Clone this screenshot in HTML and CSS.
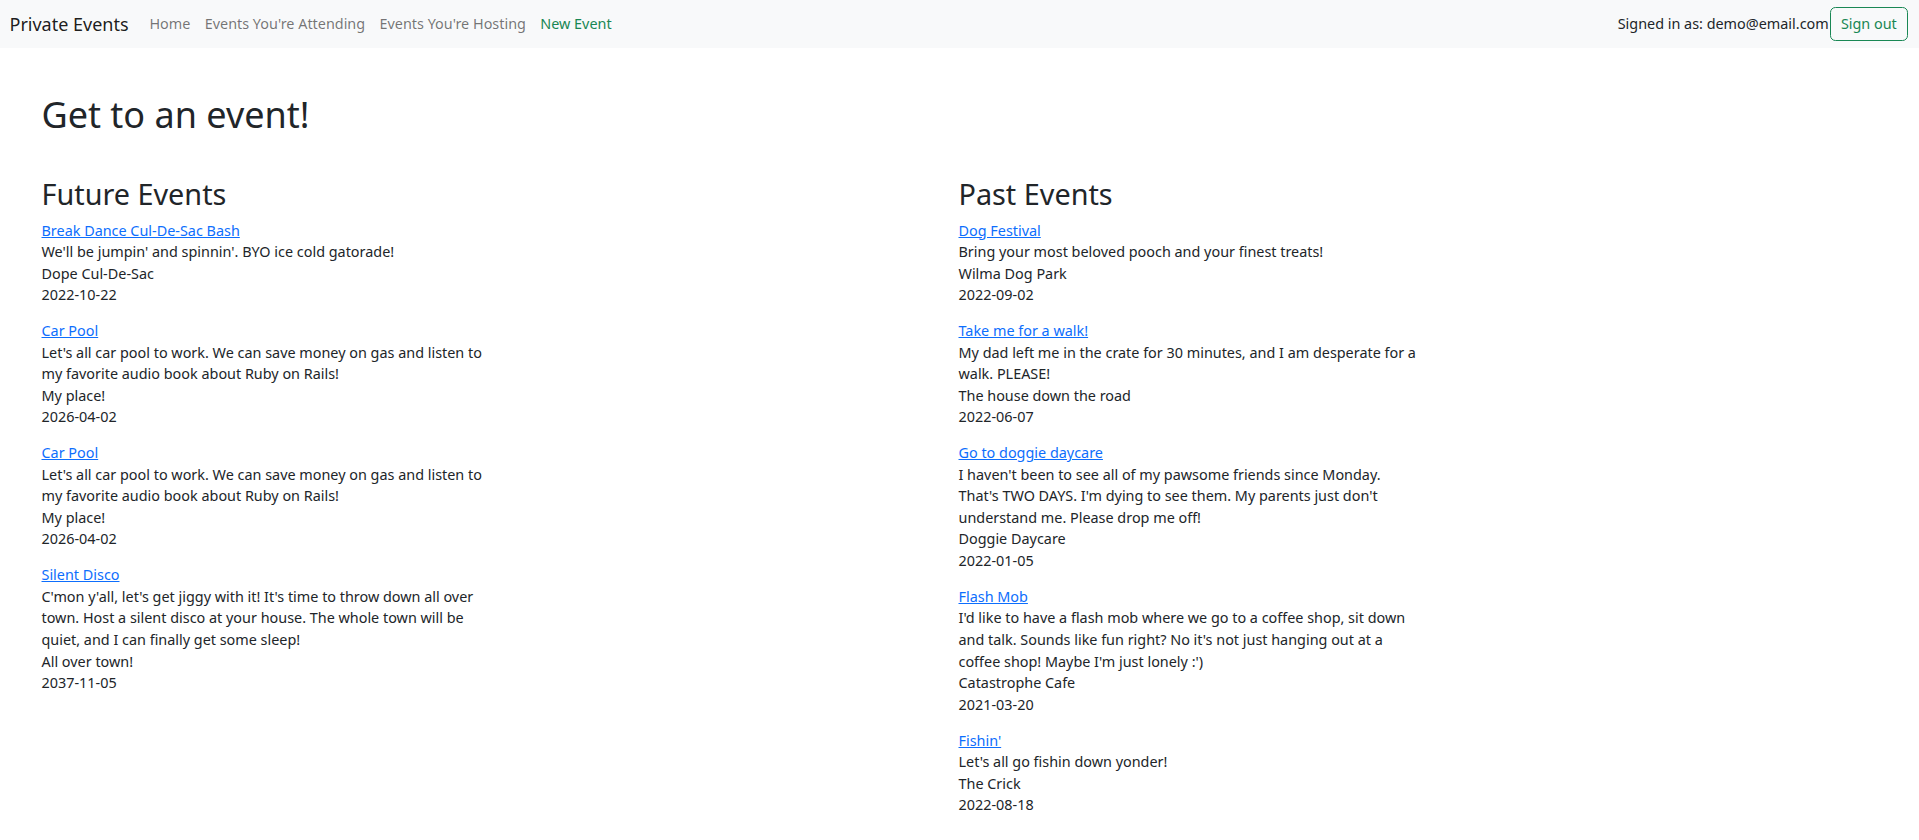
FILE: index.html
```html
<!DOCTYPE html>
<html lang="en">
<head>
<meta charset="utf-8">
<title>Private Events</title>
<link rel="stylesheet" href="styles.css">
</head>
<body>
<nav class="navbar">
  <a class="brand" href="#">Private Events</a>
  <ul class="nav">
    <li><a class="nav-link" href="#">Home</a></li>
    <li><a class="nav-link" href="#">Events You're Attending</a></li>
    <li><a class="nav-link" href="#">Events You're Hosting</a></li>
    <li><a class="nav-link nav-success" href="#">New Event</a></li>
  </ul>
  <div class="user">
    <span class="user-text">Signed in as: demo@email.com</span>
    <button class="btn-outline" type="button">Sign out</button>
  </div>
</nav>
<main class="page">
  <h1 class="title">Get to an event!</h1>
  <div class="columns">
    <section class="col">
      <h2 class="col-title">Future Events</h2>
      <div class="event">
        <a href="#">Break Dance Cul-De-Sac Bash</a>
        <div>We'll be jumpin' and spinnin'. BYO ice cold gatorade!</div>
        <div>Dope Cul-De-Sac</div>
        <div>2022-10-22</div>
      </div>
      <div class="event">
        <a href="#">Car Pool</a>
        <div>Let's all car pool to work. We can save money on gas and listen to my favorite audio book about Ruby on Rails!</div>
        <div>My place!</div>
        <div>2026-04-02</div>
      </div>
      <div class="event">
        <a href="#">Car Pool</a>
        <div>Let's all car pool to work. We can save money on gas and listen to my favorite audio book about Ruby on Rails!</div>
        <div>My place!</div>
        <div>2026-04-02</div>
      </div>
      <div class="event">
        <a href="#">Silent Disco</a>
        <div>C'mon y'all, let's get jiggy with it! It's time to throw down all over town. Host a silent disco at your house. The whole town will be quiet, and I can finally get some sleep!</div>
        <div>All over town!</div>
        <div>2037-11-05</div>
      </div>
    </section>
    <section class="col">
      <h2 class="col-title">Past Events</h2>
      <div class="event">
        <a href="#">Dog Festival</a>
        <div>Bring your most beloved pooch and your finest treats!</div>
        <div>Wilma Dog Park</div>
        <div>2022-09-02</div>
      </div>
      <div class="event">
        <a href="#">Take me for a walk!</a>
        <div>My dad left me in the crate for 30 minutes, and I am desperate for a walk. PLEASE!</div>
        <div>The house down the road</div>
        <div>2022-06-07</div>
      </div>
      <div class="event">
        <a href="#">Go to doggie daycare</a>
        <div>I haven't been to see all of my pawsome friends since Monday. That's TWO DAYS. I'm dying to see them. My parents just don't understand me. Please drop me off!</div>
        <div>Doggie Daycare</div>
        <div>2022-01-05</div>
      </div>
      <div class="event">
        <a href="#">Flash Mob</a>
        <div>I'd like to have a flash mob where we go to a coffee shop, sit down and talk. Sounds like fun right? No it's not just hanging out at a coffee shop! Maybe I'm just lonely :')</div>
        <div>Catastrophe Cafe</div>
        <div>2021-03-20</div>
      </div>
      <div class="event">
        <a href="#">Fishin'</a>
        <div>Let's all go fishin down yonder!</div>
        <div>The Crick</div>
        <div>2022-08-18</div>
      </div>
    </section>
  </div>
</main>
</body>
</html>
```
FILE: styles.css
```css
* { box-sizing: border-box; }
html, body {
  margin: 0;
  padding: 0;
}
body {
  font-family: "Noto Sans", "Open Sans", "Liberation Sans", sans-serif;
  font-size: 14.4px;
  line-height: 21.55px;
  color: #212529;
  background: #fff;
}
a { color: #0d6efd; text-decoration: underline; }

.navbar {
  display: flex;
  align-items: center;
  height: 48px;
  padding: 0 11px 0 9.5px;
  background: #f8f9fa;
}
.brand {
  font-size: 18px;
  line-height: 27px;
  color: rgba(0, 0, 0, 0.9);
  text-decoration: none;
  margin-right: 13.6px;
  white-space: nowrap;
}
.nav {
  display: flex;
  list-style: none;
  margin: 0;
  padding: 0;
}
.nav-link {
  display: block;
  padding: 0 7.2px;
  color: rgba(0, 0, 0, 0.55);
  text-decoration: none;
  white-space: nowrap;
}
.nav-success { color: #198754; }
.user {
  margin-left: auto;
  display: flex;
  align-items: center;
}
.user-text {
  color: #212529;
  white-space: nowrap;
}
.btn-outline {
  font-family: inherit;
  font-size: 14.4px;
  line-height: 21.6px;
  color: #198754;
  background: transparent;
  border: 1px solid #198754;
  border-radius: 5.4px;
  padding: 4.8px 10.2px;
  margin-left: 1px;
  cursor: pointer;
}

.page {
  padding: 0 43.5px 0 41.5px;
}
.title {
  font-size: 36px;
  font-weight: 400;
  line-height: 1.2;
  margin: 45.4px 0 40.6px;
}
.columns {
  display: grid;
  grid-template-columns: 1fr 1fr;
}
.col-title {
  font-size: 28.8px;
  font-weight: 400;
  line-height: 1.2;
  margin: 0 0 7.8px;
}
.event {
  max-width: 458px;
  margin-bottom: 14.4px;
}
.event a { display: inline-block; }
```
